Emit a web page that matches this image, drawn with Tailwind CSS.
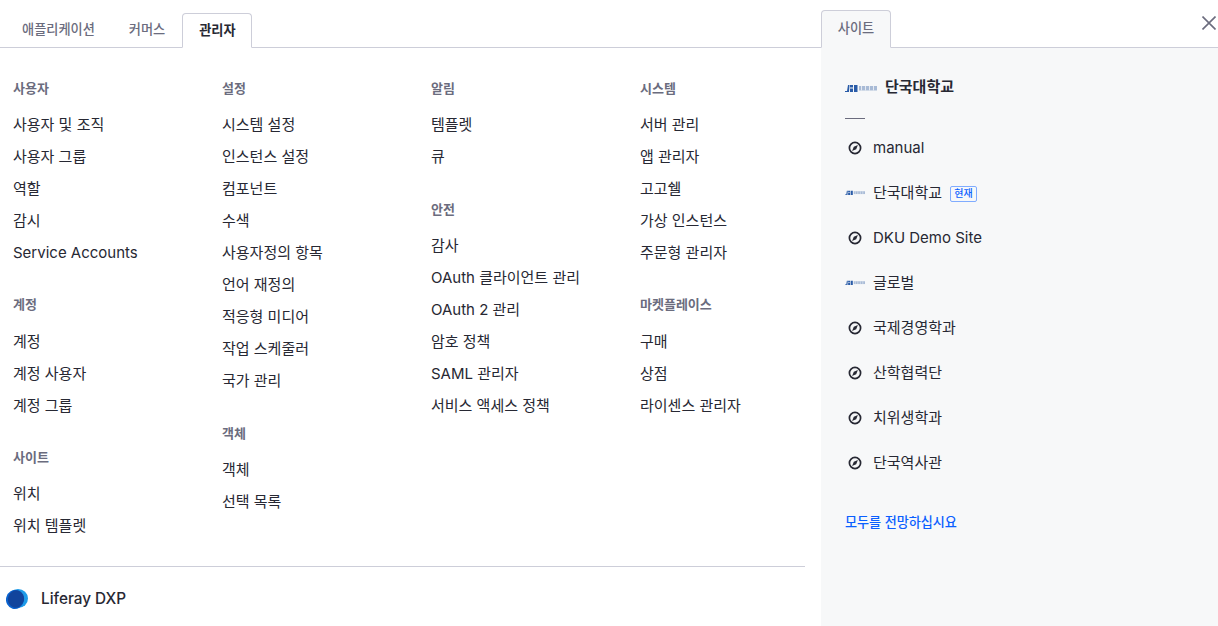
<!DOCTYPE html>
<html lang="ko">
<head>
    <meta charset="UTF-8">
    <title>Applications Menu</title>
    <script src="https://cdn.jsdelivr.net/npm/@tailwindcss/browser@4"></script>
</head>
<body class="bg-white h-[626px] overflow-hidden font-['Inter','Noto_Sans_CJK_KR',sans-serif] text-[#272833]">
    <!-- hidden icon defs -->
    <svg class="hidden">
        <symbol id="compass" viewBox="0 0 16 16">
            <circle cx="8" cy="8" r="5.6" fill="none" stroke="#272833" stroke-width="1.7"/>
            <path d="M10.900 5.100 9.200 9.200 5.100 10.900 6.800 6.800Z" fill="#272833"/>
        </symbol>
        <symbol id="logo" viewBox="0 0 32 8">
            <path d="M0 7h2l1-6h1.500l-.5 7H0Z M5 1h3v2.500H5Z M5 4.500h3V8H5Z M9 1h3.500v7H9Z" fill="#2a5ca8"/>
            <rect x="14" y="2" width="18" height="4.500" fill="#a9bbd6"/>
            <path d="M16.500 2v4.500M20.500 2v4.500M24.500 2v4.500M28.500 2v4.500" stroke="#e6ebf3" stroke-width="1"/>
        </symbol>
    </svg>

    <div class="flex h-[626px]">
        <!-- Left: tabs + menu -->
        <div class="w-[821px] shrink-0 flex flex-col">
            <div class="h-[48px] border-b border-[#cdced9] flex items-end pl-[5px]">
                <a class="h-[34px] pl-[17px] pr-[18px] flex items-center text-[13.2px] font-medium text-[#6b6c7e]">애플리케이션</a>
                <a class="h-[34px] pl-[16px] pr-[17px] flex items-center text-[13.2px] font-medium text-[#6b6c7e]">커머스</a>
                <a class="h-[35px] -mb-px pl-[16px] pr-[15px] flex items-center text-[13.2px] font-semibold text-[#272833] bg-white border border-b-white border-[#cdced9] rounded-t-[4px]">관리자</a>
            </div>

            <div class="w-[805px] h-[519px] border-b border-[#cdced9] pl-[13px] pt-[25px] grid grid-cols-[209px_209px_209px_209px]">
                <div>
                    <h3 class="h-[32px] leading-[30px] text-[13px] font-semibold text-[#6b6c7e]">사용자</h3>
                    <ul class="mt-[4px] text-[15px]">
                        <li class="h-[32px] leading-[32px]">사용자 및 조직</li>
                        <li class="h-[32px] leading-[32px]">사용자 그룹</li>
                        <li class="h-[32px] leading-[32px]">역할</li>
                        <li class="h-[32px] leading-[32px]">감시</li>
                        <li class="h-[32px] leading-[32px]">Service Accounts</li>
                    </ul>
                    <h3 class="mt-[20px] h-[32px] leading-[30px] text-[13px] font-semibold text-[#6b6c7e]">계정</h3>
                    <ul class="mt-[5px] text-[15px]">
                        <li class="h-[32px] leading-[32px]">계정</li>
                        <li class="h-[32px] leading-[32px]">계정 사용자</li>
                        <li class="h-[32px] leading-[32px]">계정 그룹</li>
                    </ul>
                    <h3 class="mt-[20px] h-[32px] leading-[30px] text-[13px] font-semibold text-[#6b6c7e]">사이트</h3>
                    <ul class="mt-[4px] text-[15px]">
                        <li class="h-[32px] leading-[32px]">위치</li>
                        <li class="h-[32px] leading-[32px]">위치 템플렛</li>
                    </ul>
                </div>
                <div>
                    <h3 class="h-[32px] leading-[30px] text-[13px] font-semibold text-[#6b6c7e]">설정</h3>
                    <ul class="mt-[4px] text-[15px]">
                        <li class="h-[32px] leading-[32px]">시스템 설정</li>
                        <li class="h-[32px] leading-[32px]">인스턴스 설정</li>
                        <li class="h-[32px] leading-[32px]">컴포넌트</li>
                        <li class="h-[32px] leading-[32px]">수색</li>
                        <li class="h-[32px] leading-[32px]">사용자정의 항목</li>
                        <li class="h-[32px] leading-[32px]">언어 재정의</li>
                        <li class="h-[32px] leading-[32px]">적응형 미디어</li>
                        <li class="h-[32px] leading-[32px]">작업 스케줄러</li>
                        <li class="h-[32px] leading-[32px]">국가 관리</li>
                    </ul>
                    <h3 class="mt-[21px] h-[32px] leading-[30px] text-[13px] font-semibold text-[#6b6c7e]">객체</h3>
                    <ul class="mt-[4px] text-[15px]">
                        <li class="h-[32px] leading-[32px]">객체</li>
                        <li class="h-[32px] leading-[32px]">선택 목록</li>
                    </ul>
                </div>
                <div>
                    <h3 class="h-[32px] leading-[30px] text-[13px] font-semibold text-[#6b6c7e]">알림</h3>
                    <ul class="mt-[4px] text-[15px]">
                        <li class="h-[32px] leading-[32px]">템플렛</li>
                        <li class="h-[32px] leading-[32px]">큐</li>
                    </ul>
                    <h3 class="mt-[21px] h-[32px] leading-[30px] text-[13px] font-semibold text-[#6b6c7e]">안전</h3>
                    <ul class="mt-[4px] text-[15px]">
                        <li class="h-[32px] leading-[32px]">감사</li>
                        <li class="h-[32px] leading-[32px]">OAuth 클라이언트 관리</li>
                        <li class="h-[32px] leading-[32px]">OAuth 2 관리</li>
                        <li class="h-[32px] leading-[32px]">암호 정책</li>
                        <li class="h-[32px] leading-[32px]">SAML 관리자</li>
                        <li class="h-[32px] leading-[32px]">서비스 액세스 정책</li>
                    </ul>
                </div>
                <div>
                    <h3 class="h-[32px] leading-[30px] text-[13px] font-semibold text-[#6b6c7e]">시스템</h3>
                    <ul class="mt-[4px] text-[15px]">
                        <li class="h-[32px] leading-[32px]">서버 관리</li>
                        <li class="h-[32px] leading-[32px]">앱 관리자</li>
                        <li class="h-[32px] leading-[32px]">고고쉘</li>
                        <li class="h-[32px] leading-[32px]">가상 인스턴스</li>
                        <li class="h-[32px] leading-[32px]">주문형 관리자</li>
                    </ul>
                    <h3 class="mt-[20px] h-[32px] leading-[30px] text-[13px] font-semibold text-[#6b6c7e]">마켓플레이스</h3>
                    <ul class="mt-[5px] text-[15px]">
                        <li class="h-[32px] leading-[32px]">구매</li>
                        <li class="h-[32px] leading-[32px]">상점</li>
                        <li class="h-[32px] leading-[32px]">라이센스 관리자</li>
                    </ul>
                </div>
            </div>

            <div class="w-[805px] flex-1 flex items-center pl-[6px] pt-[5px]">
                <svg class="w-[22px] h-[20px]" viewBox="0 0 22 20">
                    <ellipse cx="12" cy="9.500" rx="10" ry="9.500" fill="#1e9be8"/>
                    <ellipse cx="9" cy="10.500" rx="9" ry="9.500" fill="#0b63ce" transform="rotate(15 9 10.500)"/>
                    <ellipse cx="10" cy="10" rx="8" ry="8.800" fill="#11449c" transform="rotate(15 10 10)"/>
                </svg>
                <span class="ml-[13px] text-[15.3px] font-medium">Liferay DXP</span>
            </div>
        </div>

        <!-- Right: sites panel -->
        <div class="flex-1 flex flex-col relative">
            <div class="h-[48px] border-b border-[#cdced9] flex items-end ml-[-16px] pl-[16px]">
                <a class="h-[38px] -mb-px w-[70px] flex items-center justify-center text-[13.2px] font-medium text-[#6b6c7e] bg-[#f7f8f9] border border-b-[#f7f8f9] border-[#cdced9] rounded-t-[4px]">사이트</a>
            </div>
            <button class="absolute right-[2px] top-[16px] w-[14px] h-[14px]">
                <svg viewBox="0 0 14 14" class="w-[14px] h-[14px]"><path d="M.5.5l13 13M13.500.5l-13 13" stroke="#6b6c7e" stroke-width="1.600" fill="none"/></svg>
            </button>

            <div class="flex-1 bg-[#f7f8f9] pl-[24px]">
                <div class="h-[45px] mt-[17px] flex items-center">
                    <svg class="w-[32px] h-[8px]"><use href="#logo"/></svg>
                    <span class="ml-[8px] text-[15px] font-semibold">단국대학교</span>
                </div>
                <div class="mt-[8px] w-[20px] border-t border-[#6b6c7e]"></div>
                <ul class="text-[15px]">
                    <li class="h-[45px] mt-[7px] flex items-center"><svg class="w-[16px] h-[16px] ml-[2px] mr-[10px] mb-[2px]"><use href="#compass"/></svg>manual</li>
                    <li class="h-[45px] flex items-center">
                        <svg class="w-[20px] h-[5px] mr-[8px] mb-[2px]" viewBox="0 0 32 8"><use href="#logo"/></svg>단국대학교
                        <span class="ml-[8px] h-[16px] w-[27px] flex items-center justify-center text-[10px] font-medium text-[#0b5fff] border border-[#80acff] rounded-[2px]">현재</span>
                    </li>
                    <li class="h-[45px] flex items-center"><svg class="w-[16px] h-[16px] ml-[2px] mr-[10px] mb-[2px]"><use href="#compass"/></svg>DKU Demo Site</li>
                    <li class="h-[45px] flex items-center"><svg class="w-[20px] h-[5px] mr-[8px] mb-[2px]" viewBox="0 0 32 8"><use href="#logo"/></svg>글로벌</li>
                    <li class="h-[45px] flex items-center"><svg class="w-[16px] h-[16px] ml-[2px] mr-[10px] mb-[2px]"><use href="#compass"/></svg>국제경영학과</li>
                    <li class="h-[45px] flex items-center"><svg class="w-[16px] h-[16px] ml-[2px] mr-[10px] mb-[2px]"><use href="#compass"/></svg>산학협력단</li>
                    <li class="h-[45px] flex items-center"><svg class="w-[16px] h-[16px] ml-[2px] mr-[10px] mb-[2px]"><use href="#compass"/></svg>치위생학과</li>
                    <li class="h-[45px] flex items-center"><svg class="w-[16px] h-[16px] ml-[2px] mr-[10px] mb-[2px]"><use href="#compass"/></svg>단국역사관</li>
                </ul>
                <a class="block mt-[27px] text-[13.1px] font-medium text-[#0b5fff]">모두를 전망하십시요</a>
            </div>
        </div>
    </div>
</body>
</html>
